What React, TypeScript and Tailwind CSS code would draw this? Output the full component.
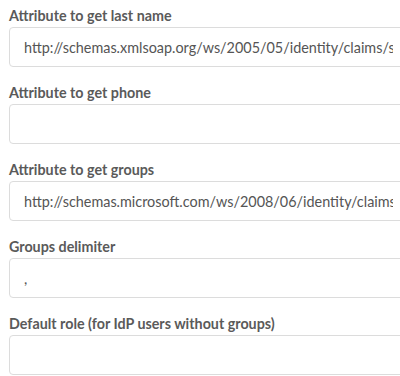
const fields = [
  { label: "Attribute to get last name", value: "http://schemas.xmlsoap.org/ws/2005/05/identity/claims/surname" },
  { label: "Attribute to get phone", value: "" },
  { label: "Attribute to get groups", value: "http://schemas.microsoft.com/ws/2008/06/identity/claims/groups" },
  { label: "Groups delimiter", value: "," },
  { label: "Default role (for IdP users without groups)", value: "" },
];

export default function App() {
  return (
    <div className="h-[376px] w-[400px] overflow-hidden bg-white font-['Lato',sans-serif]">
      <div className="flex w-[420px] flex-col pl-[9px] pt-[5px]">
        {fields.map((f) => (
          <div key={f.label} className="mb-[15px] flex flex-col">
            <label className="mb-[1px] h-[21px] text-[14.3px] font-bold leading-[22px] text-[#5a5a5a]">{f.label}</label>
            <input
              readOnly
              value={f.value}
              className="h-[40px] w-[399px] rounded-[4px] border border-[#dcdcdc] bg-white px-[14px] text-[14.4px] text-[#555] outline-none"
            />
          </div>
        ))}
      </div>
    </div>
  );
}
